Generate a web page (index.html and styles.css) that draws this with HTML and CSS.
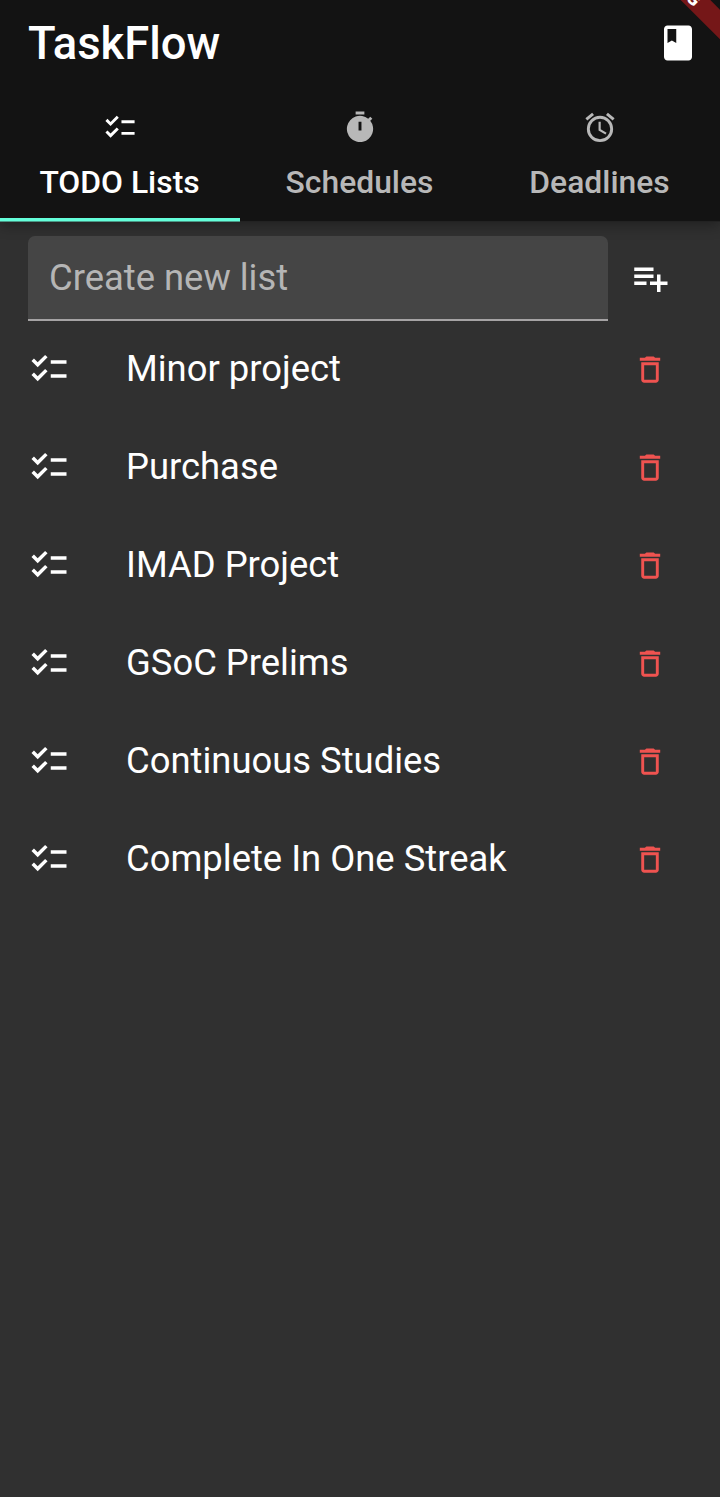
FILE: index.html
```html
<!DOCTYPE html>
<html lang="en">
<head>
<meta charset="utf-8">
<title>TaskFlow</title>
<link rel="stylesheet" href="styles.css">
</head>
<body>
<svg class="defs" width="0" height="0">
<symbol id="check" viewBox="0 0 24 24"><path d="M22 7h-9v2h9V7zm0 8h-9v2h9v-2zM5.54 11L2 7.46l1.41-1.41 2.12 2.12 4.24-4.24 1.41 1.41L5.54 11zm0 8L2 15.46l1.41-1.41 2.12 2.12 4.24-4.24 1.41 1.41L5.54 19z"/></symbol>
<symbol id="trash" viewBox="0 0 24 24"><path d="M6 19c0 1.100.9 2 2 2h8c1.100 0 2-.9 2-2V7H6v12zM8 9h8v10H8V9zm7.500-5l-1-1h-5l-1 1H5v2h14V4h-3.500z"/></symbol>
</svg>
<div class="app">
<header class="bar">
<div class="toolbar"><h1 class="title">TaskFlow</h1>
<svg class="icon" viewBox="0 0 24 24"><path d="M18 2H6c-1.100 0-2 .9-2 2v16c0 1.100.9 2 2 2h12c1.100 0 2-.9 2-2V4c0-1.100-.9-2-2-2zM6 4h5v8l-2.500-1.500L6 12V4z"/></svg></div>
<nav class="tabs">
<div class="tab active"><svg class="icon small" viewBox="0 0 24 24"><use href="#check"/></svg><span>TODO Lists</span></div>
<div class="tab"><svg class="icon small" viewBox="0 0 24 24"><path fill-rule="evenodd" d="M9 1h6v2H9zM19.030 7.390l1.420-1.420c-.43-.51-.9-.99-1.410-1.410l-1.420 1.420A9 9 0 1 0 19.030 7.390zM13 14h-2V8h2z"/></svg><span>Schedules</span></div>
<div class="tab"><svg class="icon small" viewBox="0 0 24 24"><path d="M22 5.720l-4.600-3.860-1.290 1.530 4.600 3.860L22 5.720zM7.880 3.390L6.600 1.860 2 5.710l1.290 1.530 4.590-3.850zM12.500 8H11v6l4.750 2.850.75-1.230-4-2.370V8zM12 4a9 9 0 1 0 0 18 9 9 0 0 0 0-18zm0 16a7 7 0 1 1 0-14 7 7 0 0 1 0 14z"/></svg><span>Deadlines</span></div>
</nav>
<div class="banner">DEBUG</div>
</header>
<main>
<div class="create"><div class="field">Create new list</div>
<svg class="icon" viewBox="0 0 24 24"><path d="M14 10H3v2h11v-2zm0-4H3v2h11V6zm4 8v-4h-2v4h-4v2h4v4h2v-4h4v-2h-4zM3 16h7v-2H3v2z"/></svg></div>
<ul class="list">
<li class="row"><svg class="icon"><use href="#check"/></svg><span class="name">Minor project</span><svg class="icon small red"><use href="#trash"/></svg></li>
<li class="row"><svg class="icon"><use href="#check"/></svg><span class="name">Purchase</span><svg class="icon small red"><use href="#trash"/></svg></li>
<li class="row"><svg class="icon"><use href="#check"/></svg><span class="name">IMAD Project</span><svg class="icon small red"><use href="#trash"/></svg></li>
<li class="row"><svg class="icon"><use href="#check"/></svg><span class="name">GSoC Prelims</span><svg class="icon small red"><use href="#trash"/></svg></li>
<li class="row"><svg class="icon"><use href="#check"/></svg><span class="name">Continuous Studies</span><svg class="icon small red"><use href="#trash"/></svg></li>
<li class="row"><svg class="icon"><use href="#check"/></svg><span class="name">Complete In One Streak</span><svg class="icon small red"><use href="#trash"/></svg></li>
</ul>
</main>
</div>
</body>
</html>
```
FILE: styles.css
```css
* { box-sizing: border-box; }
body { margin: 0; background: #303030; color: #fff; font-family: Roboto, sans-serif; }
.defs { display: block; }
.app { height: 1497px; overflow: hidden; }
.icon { display: block; width: 42px; height: 42px; fill: currentColor; flex: none; }
.icon.small { width: 36px; height: 35px; }
.bar { position: relative; height: 222px; background: linear-gradient(to top, #222 1px, #131313 1px); box-shadow: 0 4px 12px rgba(0, 0, 0, .3); overflow: hidden; }
.toolbar { display: flex; align-items: center; justify-content: space-between; height: 86px; padding: 0 21px 0 28px; }
.title { margin: 2px 0 0; font-size: 45.400px; font-weight: 500; line-height: 54px; }
.tabs { display: grid; grid-template-columns: repeat(3, 1fr); height: 136px; }
.tab { display: flex; flex-direction: column; align-items: center; padding-top: 24px; color: #b8b8b8; font-size: 31.850px; font-weight: 500; line-height: 38px; gap: 18px; }
.tab span { margin-right: 1px; }
.tab.active { color: #fff; background: linear-gradient(to top, #4a9886 1px, #64ffda 1px, #64ffda 4px, transparent 4px); }
.banner { position: absolute; left: 598px; top: -28px; width: 160px; height: 21px; background: #751718; transform: rotate(45deg); text-align: center; font-size: 17.850px; line-height: 21px; font-weight: 900; }
main { padding: 14px 28px 0; }
.create { display: flex; align-items: center; height: 84px; gap: 21px; }
.create .icon { margin-top: -1px; }
.field { width: 580px; height: 85px; margin-bottom: -1px; padding: 0 21px; border-radius: 7px 7px 0 0; border-bottom: 2px solid #a5a3a4; background: #454545; color: #b5b5b5; font-size: 36.400px; line-height: 83px; }
.list { margin: 0; padding: 0; list-style: none; }
.row { display: flex; align-items: center; height: 98px; padding-right: 24px; }
.name { flex: 1; margin-left: 56px; font-size: 36.400px; line-height: 44px; }
.red { color: #ef5350; }
```
